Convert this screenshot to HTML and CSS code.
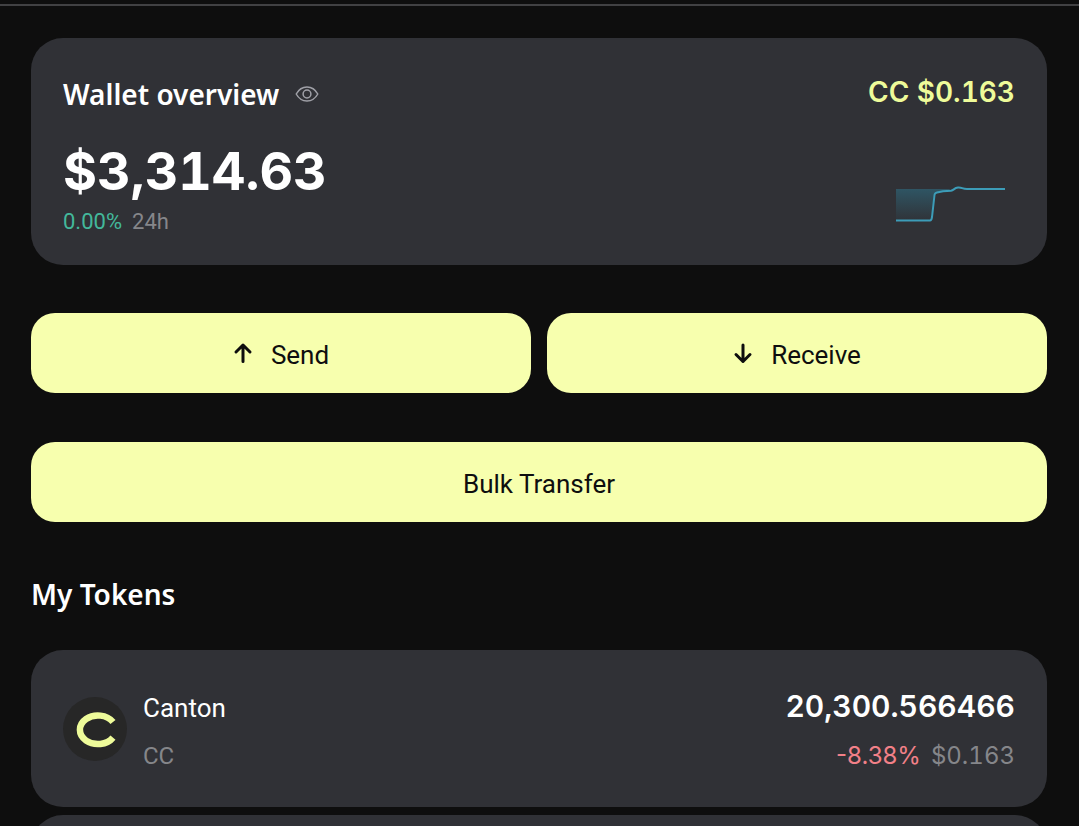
FILE: index.html
```
<!DOCTYPE html>
<html lang="en">
<head>
    <meta charset="UTF-8">
    <meta name="viewport" content="width=device-width, initial-scale=1.0">
    <title>Wallet</title>
    <link rel="stylesheet" href="styles.css">
</head>
<body>
    <header class="topbar"></header>

    <main class="container">
        <section class="card overview">
            <div class="overview-main">
                <div class="overview-header">
                    <h1 class="title">Wallet overview</h1>
                    <button class="eye-button" type="button" aria-label="Hide balance">
                        <svg width="24" height="18" viewBox="0 0 24 18" fill="none" stroke="currentColor" stroke-width="1.5">
                            <path d="M1.2 9C3.8 4.4 7.5 2 12 2s8.2 2.4 10.8 7c-2.6 4.6-6.3 7-10.8 7S3.8 13.6 1.2 9z" stroke-linejoin="round"/>
                            <circle cx="12" cy="9" r="3.9"/>
                        </svg>
                    </button>
                </div>
                <div class="balance">$3,314.63</div>
                <div class="change">
                    <span class="positive">0.00%</span>
                    <span class="muted">24h</span>
                </div>
            </div>
            <div class="overview-side">
                <div class="price">CC $0.163</div>
                <svg class="chart" width="110" height="40" viewBox="0 0 110 40" fill="none">
                    <defs>
                        <linearGradient id="chart-fill" x1="0" y1="0" x2="0" y2="1">
                            <stop offset="0" stop-color="#2d8ba8" stop-opacity="0.4"/>
                            <stop offset="1" stop-color="#2d8ba8" stop-opacity="0.03"/>
                        </linearGradient>
                    </defs>
                    <path d="M0 5H55L51 7L40 8.5L38 10L35 36H0z" fill="url(#chart-fill)"/>
                    <path d="M0 36.5H34Q35.5 36.5 36 33L38.5 11Q38.7 9 41 8.5L47 7.2L55 6.8C58 6.2 58 4 62 3.6C66 3.2 66 5 71 5H109" stroke="#3c9cb8" stroke-width="2"/>
                </svg>
            </div>
        </section>

        <div class="actions">
            <button class="button" type="button">
                <svg width="20" height="22" viewBox="0 0 20 22" fill="none" stroke="currentColor" stroke-width="3" stroke-linecap="round" stroke-linejoin="round">
                    <path d="M10 19.5V3M3 10l7-7 7 7"/>
                </svg>
                Send
            </button>
            <button class="button" type="button">
                <svg width="20" height="22" viewBox="0 0 20 22" fill="none" stroke="currentColor" stroke-width="3" stroke-linecap="round" stroke-linejoin="round">
                    <path d="M10 3V19.5M3 12.5l7 7 7-7"/>
                </svg>
                Receive
            </button>
        </div>

        <button class="button button-wide" type="button">Bulk Transfer</button>

        <h2 class="title tokens-title">My Tokens</h2>
        <ul class="tokens">
            <li class="card token">
                <svg class="token-logo" width="64" height="64" viewBox="0 0 64 64" fill="none">
                    <circle cx="32" cy="32" r="32" fill="#272727"/>
                    <path d="M50 25A18 14.3 0 1 0 50 40.6" stroke="#eefb9a" stroke-width="6.5"/>
                </svg>
                <div class="token-info">
                    <div class="token-name">Canton</div>
                    <div class="token-symbol">CC</div>
                </div>
                <div class="token-values">
                    <div class="token-amount">20,300.566466</div>
                    <div class="token-price">
                        <span class="negative">-8.38%</span>
                        <span class="muted">$0.163</span>
                    </div>
                </div>
            </li>
            <li class="card token"></li>
        </ul>
    </main>
</body>
</html>
```
FILE: styles.css
```
* {
    box-sizing: border-box;
}

body {
    margin: 0;
    background: #0e0e0e;
    color: #fff;
    font-family: Inter, "Liberation Sans", sans-serif;
    font-variant-numeric: tabular-nums;
}

h1,
h2,
ul {
    margin: 0;
    padding: 0;
}

.topbar {
    height: 6px;
    border-bottom: 2px solid #414143;
}

.container {
    padding: 32px 32px 0 31px;
}

.card {
    background: #303136;
    border-radius: 32px;
    padding: 32px;
}

.overview {
    display: flex;
    justify-content: space-between;
    min-height: 227px;
    padding-bottom: 24px;
}

.overview-header {
    display: flex;
    align-items: center;
    gap: 16px;
    height: 48px;
}

.title {
    font-family: "Noto Sans", sans-serif;
    font-size: 28px;
    font-weight: 600;
    line-height: 48px;
}

.eye-button {
    display: flex;
    padding: 0;
    border: 0;
    background: none;
    color: #a0a1a8;
    cursor: pointer;
}

.balance {
    margin-top: 22px;
    font-size: 52px;
    font-weight: 700;
    line-height: 64px;
}

.change {
    display: flex;
    gap: 10px;
    font-family: Roboto, sans-serif;
    font-size: 22px;
    line-height: 36px;
}

.positive {
    color: #43b89b;
}

.negative {
    color: #f28088;
    font-variant-numeric: normal;
}

.muted {
    color: #85868a;
}

.overview-side {
    display: flex;
    flex-direction: column;
    justify-content: space-between;
    align-items: flex-end;
}

.price {
    color: #eefb9a;
    font-size: 28px;
    font-weight: 600;
    line-height: 44px;
}

.chart {
    margin: 0 9px 17px 0;
}

.actions {
    display: grid;
    grid-template-columns: 1fr 1fr;
    gap: 16px;
    margin: 48px 0 49px;
}

.button {
    display: flex;
    align-items: center;
    justify-content: center;
    gap: 18px;
    height: 80px;
    padding: 4px 0 0;
    border: 0;
    border-radius: 24px;
    background: #f7ffae;
    color: #0e0e0e;
    font-family: Roboto, sans-serif;
    font-size: 26px;
    cursor: pointer;
}

.button svg {
    margin-bottom: 4px;
}

.button-wide {
    width: 100%;
}

.tokens-title {
    margin: 48px 0 32px;
}

.tokens {
    display: grid;
    gap: 8px;
    list-style: none;
}

.token {
    display: flex;
    align-items: center;
    gap: 16px;
    min-height: 157px;
    padding: 24px 32px;
}

.token-logo {
    flex: none;
}

.token-info,
.token-values {
    display: grid;
    gap: 8px;
    padding-top: 6px;
    line-height: 40px;
}

.token-info {
    font-family: Roboto, sans-serif;
    font-size: 26px;
}

.token-symbol {
    color: #85868a;
    font-size: 24px;
}

.token-values {
    gap: 10px;
    margin-left: auto;
    padding-top: 4px;
    text-align: right;
}

.token-amount {
    font-size: 30px;
    font-weight: 600;
}

.token-price {
    display: flex;
    justify-content: flex-end;
    gap: 10px;
    font-size: 24px;
}
```
